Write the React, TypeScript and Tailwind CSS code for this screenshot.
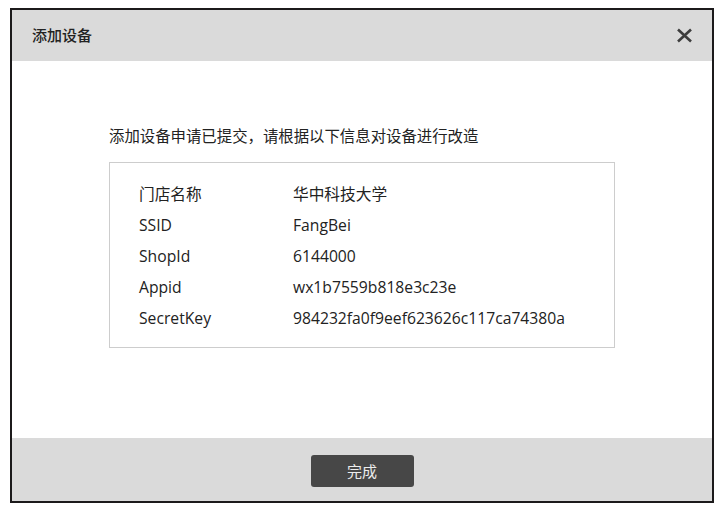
import React from "react";

const rows: [string, string][] = [
  ["门店名称", "华中科技大学"],
  ["SSID", "FangBei"],
  ["ShopId", "6144000"],
  ["Appid", "wx1b7559b818e3c23e"],
  ["SecretKey", "984232fa0f9eef623626c117ca74380a"],
];

export default function App() {
  return (
    <div
      className="w-[722px] h-[509px] bg-white pt-[8px] pl-[10px]"
      style={{ fontFamily: '"Open Sans", "Noto Sans CJK SC", sans-serif' }}
    >
      <div className="w-[704px] h-[495px] border-2 border-[#1c1a1b] flex flex-col bg-white">
        <div className="h-[51px] bg-[#dadada] flex items-center justify-between pl-[20px] pr-[19px]">
          <span className="text-[15px] text-[#222] font-medium leading-none">添加设备</span>
          <svg width="17" height="15" viewBox="0 0 17 15" className="block">
            <path d="M2 1.5 L15 13.5 M15 1.5 L2 13.5" stroke="#3d3d3d" strokeWidth="2.6" strokeLinecap="butt" />
          </svg>
        </div>
        <div className="flex-1 pl-[97px] pt-[66px]">
          <div className="text-[15.4px] leading-[20px] text-[#222]">
            添加设备申请已提交，请根据以下信息对设备进行改造
          </div>
          <div className="mt-[15px] w-[506px] border border-[#cdcdcd] pl-[29px] pt-[16px] pb-[13px]">
            {rows.map(([k, v]) => (
              <div key={k} className="flex text-[15.7px] leading-[31px] text-[#222]">
                <div className="w-[154px]">{k}</div>
                <div>{v}</div>
              </div>
            ))}
          </div>
        </div>
        <div className="h-[63px] bg-[#dadada] flex justify-center pt-[17px]">
          <button className="w-[103px] h-[32px] rounded-[3px] bg-[#474747] text-[#ececec] text-[15px] leading-none">
            完成
          </button>
        </div>
      </div>
    </div>
  );
}
